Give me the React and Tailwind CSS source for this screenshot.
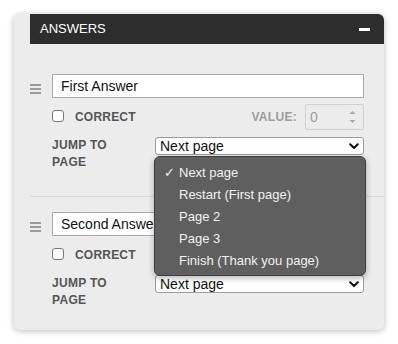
import React from 'react';

const font = { fontFamily: '"Liberation Sans", Arial, sans-serif' };

const Handle = () => (
    <div className="w-[22px] flex flex-col gap-[2px] pt-[10px]">
        <div className="w-[11px] h-[2px] bg-[#9a9a9a]"></div>
        <div className="w-[11px] h-[2px] bg-[#9a9a9a]"></div>
        <div className="w-[11px] h-[2px] bg-[#9a9a9a]"></div>
    </div>
);

const Chevron = () => (
    <svg width="10" height="7" viewBox="0 0 10 7" className="mr-[4px]">
        <path d="M1.2 1.2 L5 5 L8.8 1.2" fill="none" stroke="#111" strokeWidth="2" strokeLinecap="round" strokeLinejoin="round" />
    </svg>
);

const Answer = ({ text, showValue }) => (
    <div className="flex">
        <Handle />
        <div className="flex-1">
            <div className="h-[24px] bg-white border border-[#a9a9a9] flex items-center pl-[8px] text-[14px] text-[#111]">{text}</div>
            <div className="mt-[6px] h-[26px] flex items-center justify-between">
                <div className="flex items-center">
                    <div className="w-[12px] h-[12px] border border-[#777] rounded-[3px] bg-white -mt-[3px]"></div>
                    <span className="ml-[11px] text-[12px] font-bold text-[#555] tracking-[0.2px]">CORRECT</span>
                </div>
                {showValue && (
                    <div className="flex items-center">
                        <span className="text-[12px] font-bold text-[#9d9d9d] tracking-[0.3px] mr-[8px]">VALUE:</span>
                        <div className="w-[59px] h-[26px] border border-[#cfcfcf] rounded-[2px] bg-[#ececec] flex items-center justify-between pl-[4px] pr-[7px]">
                            <span className="text-[14px] text-[#9a9a9a]">0</span>
                            <svg width="7" height="14" viewBox="0 0 7 14">
                                <path d="M0.5 4 L3.5 1 L6.5 4 Z" fill="#a8a8a8" />
                                <path d="M0.5 10 L3.5 13 L6.5 10 Z" fill="#a8a8a8" />
                            </svg>
                        </div>
                    </div>
                )}
            </div>
            <div className="mt-[7px] flex items-start">
                <div className="w-[103px] text-[12px] font-bold text-[#555] leading-[17px] tracking-[0.3px]">
                    <div>JUMP TO</div>
                    <div>PAGE</div>
                </div>
                <div className="flex-1 h-[18px] bg-white border border-[#9c9c9c] rounded-[3px] flex items-center justify-between pl-[4px] text-[14px] text-[#111]">
                    <span>Next page</span>
                    <Chevron />
                </div>
            </div>
        </div>
    </div>
);

export default function App() {
    const options = ['Next page', 'Restart (First page)', 'Page 2', 'Page 3', 'Finish (Thank you page)'];
    return (
        <div className="w-[398px] h-[344px] bg-white pt-[14px] pl-[14px]" style={font}>
            <div className="relative w-[370px] h-[316px] bg-[#ececec] rounded-[6px] shadow-[0_1px_6px_rgba(0,0,0,0.28)] pl-[16px]">
                <div className="h-[30px] bg-[#2d2d2d] rounded-tr-[6px] flex items-center justify-between pl-[10px] pr-[14px]">
                    <span className="text-[13px] text-white">ANSWERS</span>
                    <div className="w-[11px] h-[3px] bg-white"></div>
                </div>
                <div className="pt-[30px]">
                    <div className="pr-[20px] pb-[25px]">
                        <Answer text="First Answer" showValue />
                    </div>
                    <div className="border-t border-[#d8d8d8] pt-[15px] pr-[20px]">
                        <Answer text="Second Answer" />
                    </div>
                </div>
                <div className="absolute left-[140px] top-[142px] w-[212px] h-[120px] bg-[#5f5f5f] border border-[#3e3e3e] rounded-[6px] shadow-[0_2px_6px_rgba(0,0,0,0.3)] pt-[5px]">
                    {options.map((o, i) => (
                        <div key={o} className="h-[22px] flex items-center text-[13px] text-[#f1f1f1]">
                            <span className="w-[24px] pl-[9px] text-[13px]">{i === 0 ? '✓' : ''}</span>
                            <span>{o}</span>
                        </div>
                    ))}
                </div>
            </div>
        </div>
    );
}
